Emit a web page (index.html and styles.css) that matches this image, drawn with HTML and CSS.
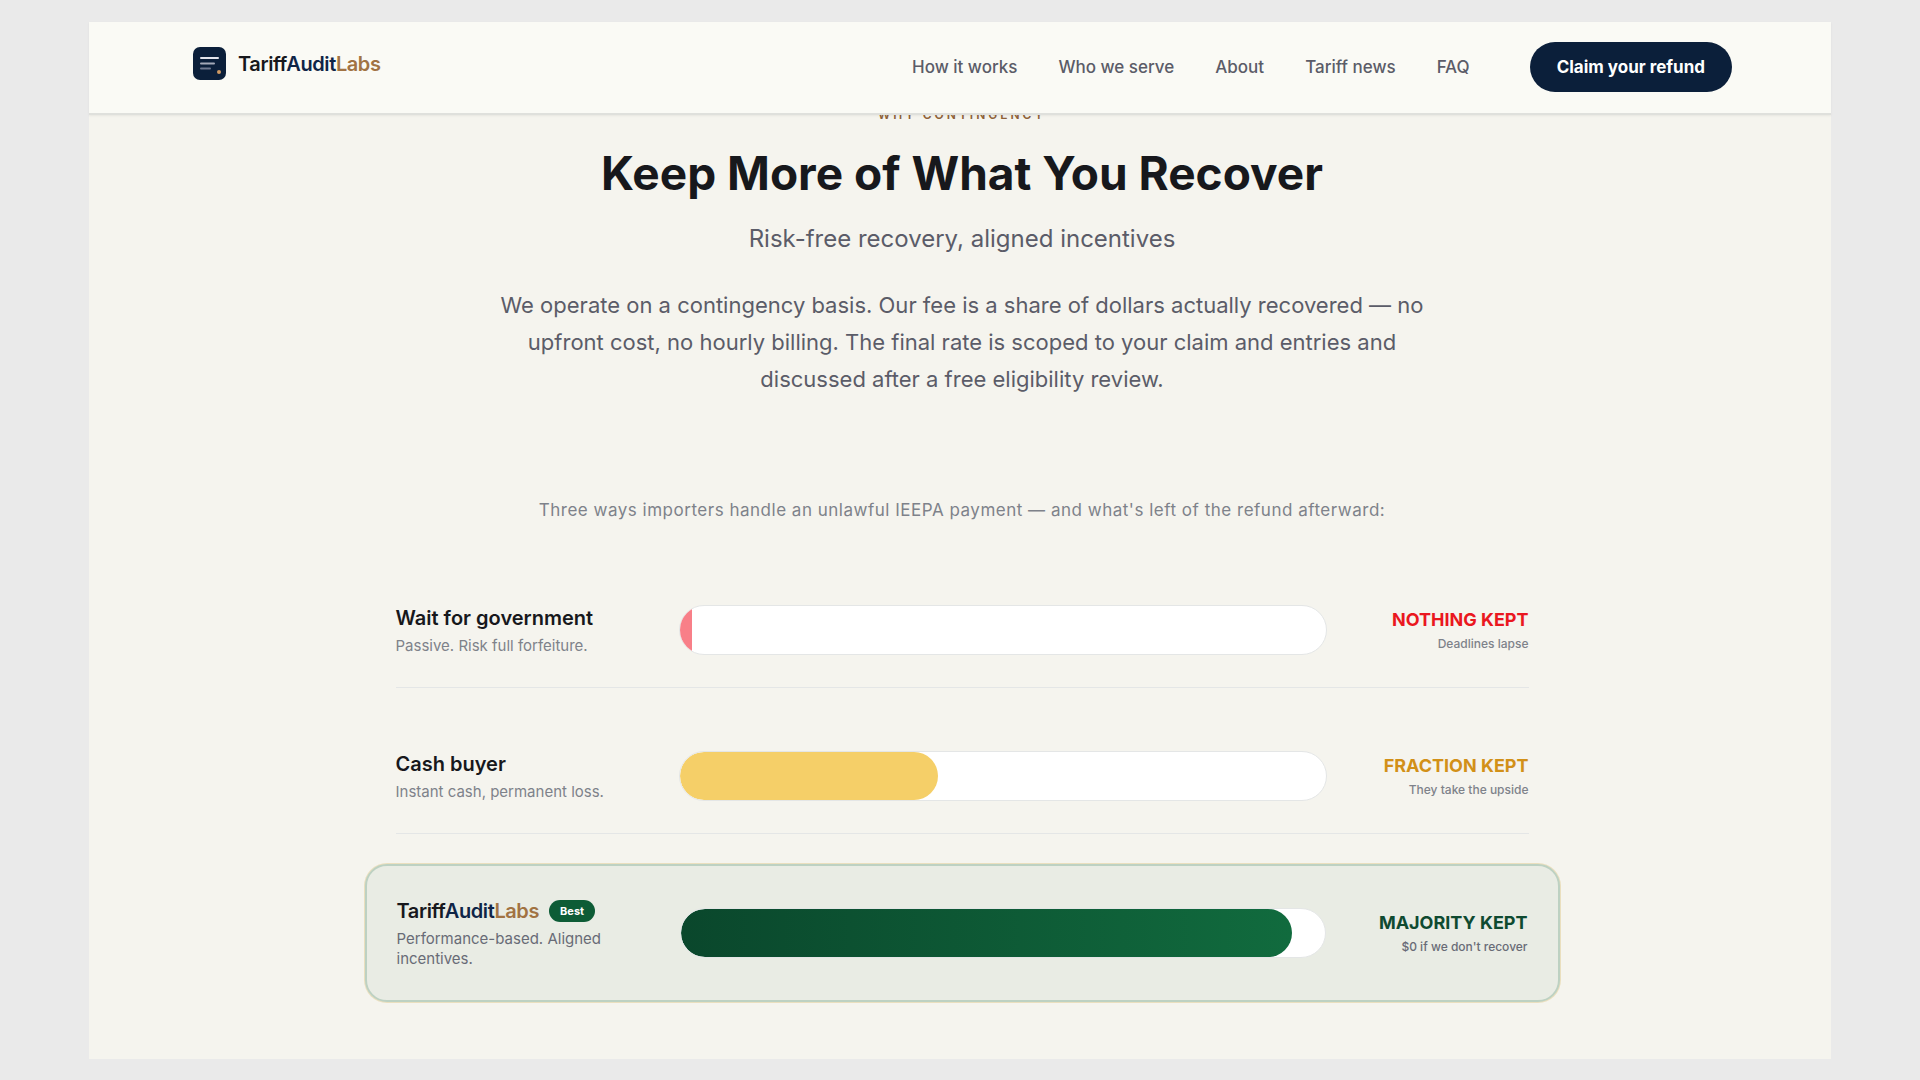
FILE: index.html
```html
<!DOCTYPE html>
<html lang="en">
<head>
	<meta charset="utf-8">
	<title>TariffAuditLabs</title>
	<link rel="stylesheet" href="styles.css">
</head>
<body>
	<div class="page">
		<header class="header">
			<a href="#" class="logo">
				<svg class="logo-mark" viewBox="0 0 33 33" aria-hidden="true">
					<rect width="33" height="33" rx="7" fill="#0b1f3a"/>
					<path d="M8 11h17" stroke="#e3e4ec" stroke-width="2" stroke-linecap="round"/>
					<path d="M8 16.500h13" stroke="#a4a9b8" stroke-width="2" stroke-linecap="round"/>
					<path d="M8 21.500h9" stroke="#6f7990" stroke-width="2" stroke-linecap="round"/>
					<circle cx="26" cy="25" r="2" fill="#d09a62"/>
				</svg>
				<span class="wordmark">Tariff<span class="navy">Audit</span><span class="bronze">Labs</span></span>
			</a>
			<nav class="nav">
				<a href="#">How it works</a>
				<a href="#">Who we serve</a>
				<a href="#">About</a>
				<a href="#">Tariff news</a>
				<a href="#">FAQ</a>
			</nav>
			<button type="button" class="claim">Claim your refund</button>
		</header>

		<main class="main">
			<section class="intro">
				<p class="eyebrow">WHY CONTINGENCY</p>
				<h1>Keep More of What You Recover</h1>
				<p class="subtitle">Risk-free recovery, aligned incentives</p>
				<p class="lead">We operate on a contingency basis. Our fee is a share of dollars actually recovered — no upfront cost, no hourly billing. The final rate is scoped to your claim and entries and discussed after a free eligibility review.</p>
			</section>

			<p class="caption">Three ways importers handle an unlawful IEEPA payment — and what's left of the refund afterward:</p>

			<section class="options">
				<div class="option">
					<div>
						<h2>Wait for government</h2>
						<p class="note">Passive. Risk full forfeiture.</p>
					</div>
					<div class="bar"><div class="fill red" style="width: 2%"></div></div>
					<div class="result">
						<p class="kept kept-red">NOTHING KEPT</p>
						<p class="detail">Deadlines lapse</p>
					</div>
				</div>

				<div class="option">
					<div>
						<h2>Cash buyer</h2>
						<p class="note">Instant cash, permanent loss.</p>
					</div>
					<div class="bar"><div class="fill yellow" style="width: 40%"></div></div>
					<div class="result">
						<p class="kept kept-yellow">FRACTION KEPT</p>
						<p class="detail">They take the upside</p>
					</div>
				</div>

				<div class="option best">
					<div>
						<h2><span class="wordmark">Tariff<span class="navy">Audit</span><span class="bronze">Labs</span></span> <span class="badge">Best</span></h2>
						<p class="note">Performance-based. Aligned incentives.</p>
					</div>
					<div class="bar"><div class="fill green" style="width: 95%"></div></div>
					<div class="result">
						<p class="kept kept-green">MAJORITY KEPT</p>
						<p class="detail">$0 if we don't recover</p>
					</div>
				</div>
			</section>
		</main>
	</div>
</body>
</html>
```
FILE: styles.css
```css
* {
	box-sizing: border-box;
}

body {
	margin: 0;
	padding: 22px 89px 21px;
	background-color: #eaeaea;
	font-family: Inter, "Liberation Sans", sans-serif;
	color: #17181c;
}

h1, h2, p {
	margin: 0;
}

a {
	text-decoration: none;
}

.page {
	background-color: #f5f4ee;
}

.header {
	position: relative;
	z-index: 1;
	display: flex;
	align-items: center;
	padding: 20px 99px 21px 104px;
	background-color: #fafaf5;
	border-bottom: 2px solid #dfe0dc;
	box-shadow: 0 1px 2px rgba(0, 0, 0, 0.06);
}

.logo {
	display: flex;
	align-items: center;
	gap: 12px;
	padding-bottom: 7px;
	color: #17181c;
}

.logo-mark {
	width: 33px;
	height: 33px;
}

.wordmark {
	font-size: 20px;
	font-weight: 600;
	letter-spacing: -0.02em;
}

.navy {
	color: #0f2547;
}

.bronze {
	color: #a17343;
}

.nav {
	display: flex;
	gap: 41px;
	margin-left: auto;
	margin-right: 60px;
}

.nav a {
	font-size: 17px;
	font-weight: 500;
	color: #5b5c68;
}

.claim {
	height: 50px;
	padding: 0 27px;
	border: none;
	border-radius: 25px;
	background-color: #0b1f3a;
	color: #fff;
	font-family: inherit;
	font-size: 17px;
	font-weight: 700;
	cursor: pointer;
}

.main {
	padding: 0 100px 57px 104px;
}

/* the first line tucks under the header */
.intro {
	max-width: 940px;
	margin: -10px auto 0;
	text-align: center;
}

.eyebrow {
	font-size: 12px;
	line-height: 20px;
	font-weight: 600;
	letter-spacing: 0.25em;
	color: #8f6238;
}

h1 {
	margin-top: 20px;
	font-size: 46px;
	line-height: 56px;
	font-weight: 700;
}

.subtitle {
	margin-top: 22px;
	font-size: 24px;
	line-height: 32px;
	color: #5b5c68;
}

.lead {
	margin-top: 32px;
	font-size: 22px;
	line-height: 37px;
	color: #5b5c68;
}

.caption {
	margin-top: 100px;
	font-size: 17px;
	line-height: 24px;
	letter-spacing: 0.03em;
	text-align: center;
	color: #7e828a;
}

.options {
	display: flex;
	flex-direction: column;
	gap: 30px;
	max-width: 1133px;
	margin: 50px auto 0;
}

.option {
	display: grid;
	grid-template-columns: 243px 1fr 162px;
	gap: 40px;
	align-items: center;
	padding: 32px 0 31px;
	border-bottom: 1px solid #e4e6e6;
}

.option.best {
	margin: 0 -31px;
	padding: 31px 30px;
	border: 2px solid #bdd1c2;
	border-radius: 22px;
	background-color: #e9ece4;
	box-shadow: 0 0 0 1px #eadfbe;
}

h2 {
	display: flex;
	align-items: center;
	gap: 10px;
	margin-bottom: 4px;
	font-size: 20px;
	line-height: 28px;
	font-weight: 600;
}

.note {
	font-size: 15px;
	line-height: 20px;
	color: #7e828a;
}

.best .note,
.best .detail {
	color: #686b76;
}

.badge {
	padding: 0 11px;
	border-radius: 11px;
	background-color: #0d5c36;
	color: #fff;
	font-size: 11px;
	line-height: 22px;
	font-weight: 700;
}

.bar {
	height: 50px;
	overflow: hidden;
	border: 1px solid #e4e6e6;
	border-radius: 25px;
	background-color: #fff;
}

.fill {
	height: 100%;
}

.red {
	background-color: #f87f88;
}

.yellow {
	border-radius: 25px;
	background-color: #f5cf68;
}

.green {
	border-radius: 25px;
	background: linear-gradient(90deg, #0a472c, #116b3e);
}

.result {
	text-align: right;
	white-space: nowrap;
}

.kept {
	margin-bottom: 4px;
	font-size: 18px;
	line-height: 24px;
	font-weight: 700;
}

.kept-red {
	color: #ea1720;
}

.kept-yellow {
	color: #d29018;
}

.kept-green {
	color: #0f4a30;
}

.detail {
	font-size: 12px;
	line-height: 16px;
	font-weight: 500;
	color: #7e828a;
}
```
